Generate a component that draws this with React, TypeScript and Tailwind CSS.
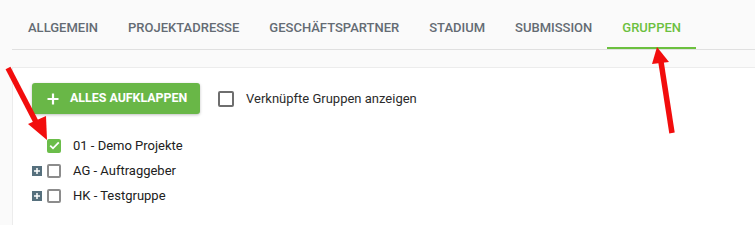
import React from "react";

const tabs = ["Allgemein", "Projektadresse", "Geschäftspartner", "Stadium", "Submission", "Gruppen"];

function Check({ checked }: { checked?: boolean }) {
  if (checked) {
    return (
      <div className="w-[14px] h-[14px] rounded-[2px] bg-[#6bbd4a] flex items-center justify-center">
        <svg width="11" height="9" viewBox="0 0 11 9">
          <path d="M1.2 4.6 L4 7.3 L9.8 1.4" fill="none" stroke="#fff" strokeWidth="1.8" />
        </svg>
      </div>
    );
  }
  return <div className="w-[14px] h-[14px] rounded-[2px] border-2 border-[#8c8c8c] bg-white" />;
}

function PlusBox() {
  return (
    <div className="w-[10px] h-[10px] bg-[#56707d] flex items-center justify-center">
      <svg width="10" height="10" viewBox="0 0 10 10">
        <path d="M5 2 V8 M2 5 H8" stroke="#fff" strokeWidth="1.5" />
      </svg>
    </div>
  );
}

export default function App() {
  const rows = [
    { label: "01 - Demo Projekte", checked: true, plus: false },
    { label: "AG - Auftraggeber", checked: false, plus: true },
    { label: "HK - Testgruppe", checked: false, plus: true },
  ];
  return (
    <div
      className="relative w-[755px] h-[225px] bg-[#fafafa] overflow-hidden flex flex-col"
      style={{ fontFamily: "Roboto, 'Liberation Sans', sans-serif" }}
    >
      <div className="ml-[12px] pt-[8px] border-b border-[#e0e0e0] flex pl-[1px]">
        {tabs.map((t) => {
          const active = t === "Gruppen";
          return (
            <div
              key={t}
              className={`h-[41px] px-[15px] flex items-center text-[13px] font-medium uppercase border-b-2 ${
                active ? "border-[#6cc03f] text-[#6cc03f]" : "border-transparent text-[#646b73]"
              }`}
            >
              {t}
            </div>
          );
        })}
      </div>
      <div className="ml-[12px] mt-[17px] flex-1 bg-white border-t border-l border-[#ececec] pl-[19px] pt-[15px]">
        <div className="flex items-center">
          <button className="w-[168px] h-[31px] rounded-[3px] bg-[#69b747] text-white flex items-center pl-[15px] shadow-[0_1px_3px_rgba(0,0,0,0.25)]">
            <svg width="12" height="12" viewBox="0 0 12 12" className="mr-[11px]">
              <path d="M6 0.5 V11.5 M0.5 6 H11.5" stroke="#fff" strokeWidth="2.2" />
            </svg>
            <span className="text-[12.4px] font-bold uppercase">Alles aufklappen</span>
          </button>
          <div className="ml-[18px] w-[16px] h-[16px] rounded-[2px] border-2 border-[#6e6e6e]" />
          <span className="ml-[12px] text-[13px] text-[#2b2b2b]">Verknüpfte Gruppen anzeigen</span>
        </div>
        <div className="mt-[19px] flex flex-col">
          {rows.map((r) => (
            <div key={r.label} className="h-[25px] flex items-center">
              <div className="w-[15px] flex items-center">{r.plus ? <PlusBox /> : null}</div>
              <Check checked={r.checked} />
              <span className="ml-[12px] text-[13px] text-[#212121]">{r.label}</span>
            </div>
          ))}
        </div>
      </div>
      <svg className="absolute left-0 top-0 pointer-events-none" width="755" height="225">
        <line x1="8" y1="68" x2="36" y2="122" stroke="#f20d0d" strokeWidth="5.5" />
        <polygon points="28,124 47,140 46,116" fill="#f20d0d" />
        <line x1="672" y1="133" x2="661" y2="62" stroke="#f20d0d" strokeWidth="5.5" />
        <polygon points="652,64 669,62 657,47" fill="#f20d0d" />
      </svg>
    </div>
  );
}
